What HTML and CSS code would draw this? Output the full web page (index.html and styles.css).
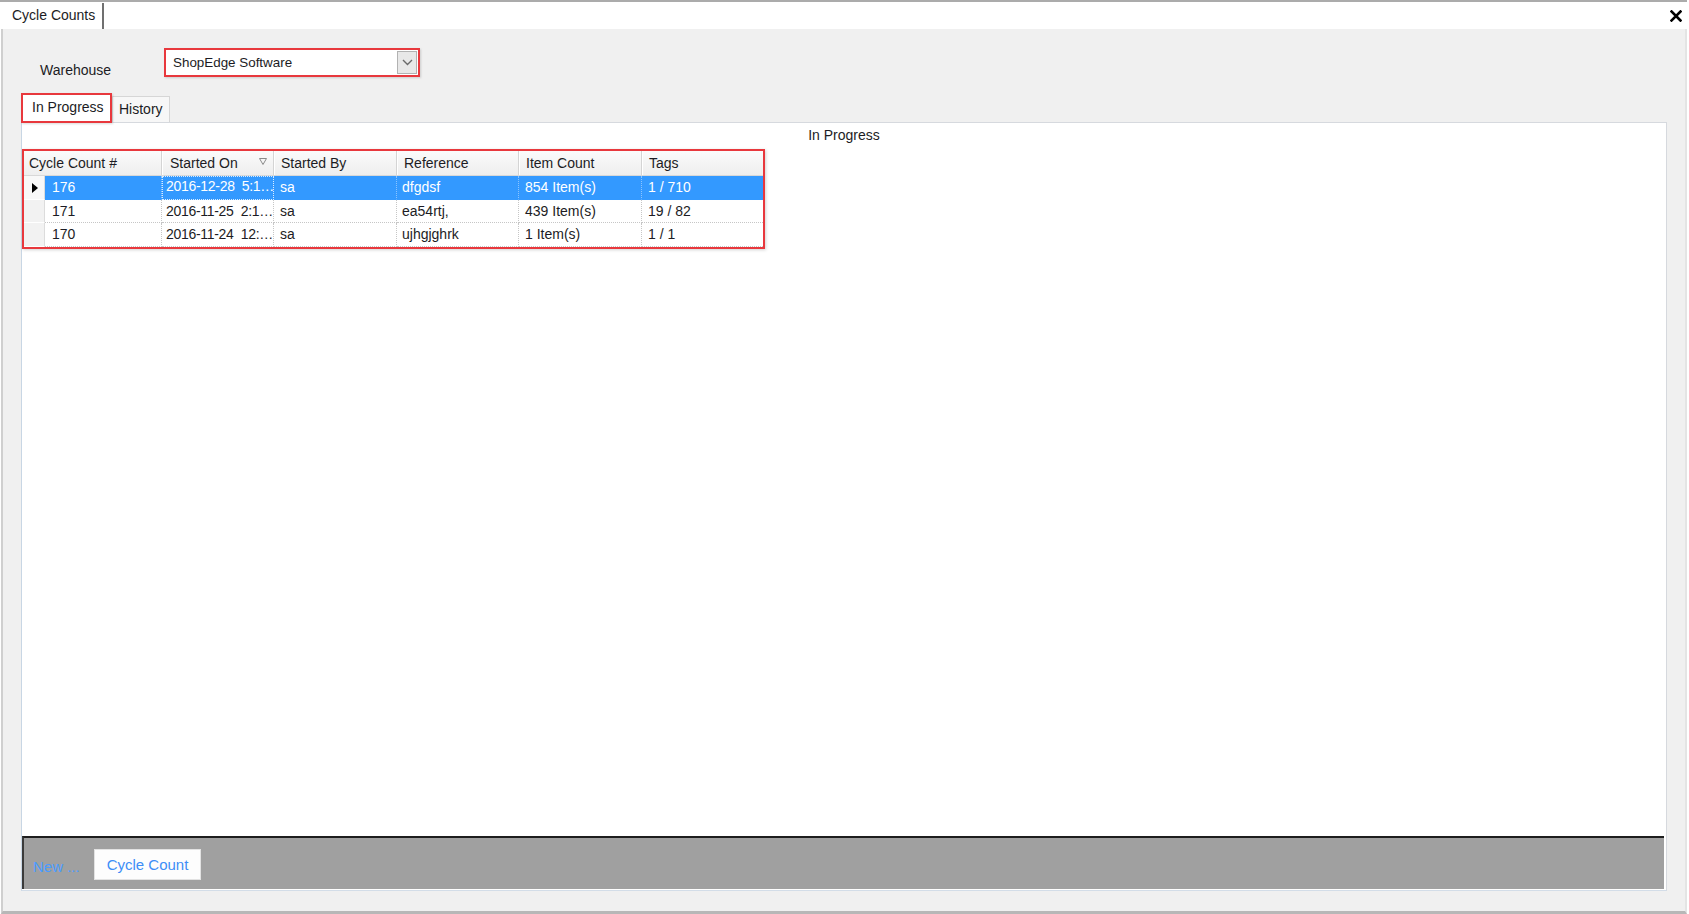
FILE: index.html
```html
<!DOCTYPE html>
<html>
<head>
<meta charset="utf-8">
<link rel="stylesheet" href="styles.css">
</head>
<body>
<div class="app">
  <div class="doc-strip">
    <div class="doc-tab">Cycle Counts</div>
    <div class="close-btn">
      <svg width="12" height="12" viewBox="0 0 12 12"><path d="M1.5 1.5 L10.5 10.5 M10.5 1.5 L1.5 10.5" stroke="#000" stroke-width="2.6" stroke-linecap="square"/></svg>
    </div>
  </div>
  <div class="main">
    <div class="wh-row">
      <div class="wh-label">Warehouse</div>
      <div class="combo">
        <span class="combo-text">ShopEdge Software</span>
        <span class="combo-btn">
          <svg width="11" height="7" viewBox="0 0 11 7"><path d="M1 1 L5.5 5.5 L10 1" fill="none" stroke="#6a6a6a" stroke-width="1.4"/></svg>
        </span>
      </div>
    </div>
    <div class="tabs">
      <div class="tab tab-active">In Progress</div>
      <div class="tab">History</div>
    </div>
    <div class="panel">
      <div class="caption">In Progress</div>
      <div class="grid">
        <div class="g-row g-head">
          <div class="h-cell h-first">Cycle Count #</div>
          <div class="h-cell c2">Started On
            <svg class="filter" width="8" height="7" viewBox="0 0 8 7"><path d="M0.5 0.5 L7.5 0.5 L4 6.5 Z" fill="none" stroke="#8a8a8a" stroke-width="1"/></svg>
          </div>
          <div class="h-cell c3">Started By</div>
          <div class="h-cell c4">Reference</div>
          <div class="h-cell c5">Item Count</div>
          <div class="h-cell c6">Tags</div>
        </div>
        <div class="g-row g-sel">
          <div class="r-head"><svg width="6" height="10" viewBox="0 0 6 10"><path d="M0 0 L6 5 L0 10 Z" fill="#000"/></svg></div>
          <div class="cell c1">176</div>
          <div class="cell c2 focus">2016-12-28&nbsp; 5:1…</div>
          <div class="cell c3">sa</div>
          <div class="cell c4">dfgdsf</div>
          <div class="cell c5">854 Item(s)</div>
          <div class="cell c6">1 / 710</div>
        </div>
        <div class="g-row">
          <div class="r-head"></div>
          <div class="cell c1">171</div>
          <div class="cell c2">2016-11-25&nbsp; 2:1…</div>
          <div class="cell c3">sa</div>
          <div class="cell c4">ea54rtj,</div>
          <div class="cell c5">439 Item(s)</div>
          <div class="cell c6">19 / 82</div>
        </div>
        <div class="g-row g-last">
          <div class="r-head"></div>
          <div class="cell c1">170</div>
          <div class="cell c2">2016-11-24&nbsp; 12:…</div>
          <div class="cell c3">sa</div>
          <div class="cell c4">ujhgjghrk</div>
          <div class="cell c5">1 Item(s)</div>
          <div class="cell c6">1 / 1</div>
        </div>
      </div>
      <div class="spacer"></div>
      <div class="toolbar">
        <span class="new-label">New ...</span>
        <span class="tb-btn">Cycle Count</span>
      </div>
    </div>
  </div>
</div>
</body>
</html>
```

FILE: styles.css
```css
* { box-sizing: border-box; }
html, body { margin: 0; padding: 0; }
body {
  width: 1689px;
  height: 914px;
  overflow: hidden;
  background: #ffffff;
  font-family: "Liberation Sans", Arial, sans-serif;
  font-size: 14px;
  color: #1c1c24;
}
.app {
  width: 1689px;
  height: 914px;
  display: flex;
  flex-direction: column;
}
.doc-strip {
  height: 29px;
  flex: none;
  border-top: 2px solid #ababab;
  margin-right: 2px;
  background: #ffffff;
  display: flex;
  align-items: flex-end;
}
.doc-tab {
  margin-left: 8px;
  height: 26px;
  padding: 0 7px 0 4px;
  line-height: 24px;
  border-right: 2px solid #707070;
  background: #ffffff;
}
.close-btn {
  margin-left: auto;
  margin-right: 5px;
  align-self: center;
  display: flex;
  padding-top: 1px;
}
.main {
  flex: 1;
  margin-left: 1px;
  margin-right: 2px;
  background: #f0f0f0;
  border-left: 2px solid #cfcfcf;
  border-right: 2px solid #e4e4e4;
  border-bottom: 3px solid #b7b7b7;
  padding-top: 19px;
  display: flex;
  flex-direction: column;
}
.wh-row {
  display: flex;
  height: 29px;
  padding-left: 37px;
}
.wh-label {
  width: 124px;
  margin-top: 14px;
  line-height: 16px;
}
.combo {
  width: 256px;
  height: 29px;
  border: 2px solid #e8383d;
  background: #ffffff;
  display: flex;
  align-items: center;
  padding-left: 7px;
  box-shadow: 1px 1px 2px rgba(0,0,0,0.15);
}
.combo-text {
  flex: 1;
  font-size: 13.4px;
  padding-bottom: 1px;
}
.combo-btn {
  width: 20px;
  height: 23px;
  margin-right: 1px;
  background: #e8e8e8;
  border: 1px solid #b2b2b2;
  display: flex;
  align-items: center;
  justify-content: center;
}
.tabs {
  display: flex;
  align-items: flex-start;
  height: 29px;
  margin-top: 16px;
  padding-left: 18px;
}
.tab {
  height: 26px;
  margin-top: 3px;
  padding: 0 6px;
  line-height: 24px;
  background: #f7f7f7;
  border: 1px solid #d6d6d6;
  border-bottom: none;
}
.tab-active {
  position: relative;
  z-index: 1;
  height: 30px;
  margin-top: 0;
  width: 91px;
  padding: 0 0 0 9px;
  line-height: 24px;
  background: #ffffff;
  border: 2px solid #e8383d;
  box-shadow: 1px 1px 2px rgba(0,0,0,0.15);
}
.panel {
  margin-left: 18px;
  width: 1646px;
  height: 769px;
  background: #ffffff;
  border: 1px solid #d6d9de;
  border-left-color: #c8d6e4;
  border-bottom-color: #d3dde8;
  display: flex;
  flex-direction: column;
}
.caption {
  height: 26px;
  line-height: 24px;
  text-align: center;
  flex: none;
}
.grid {
  width: 743px;
  height: 100px;
  border: 2px solid #e8383d;
  flex: none;
  box-shadow: 1px 1px 3px rgba(0,0,0,0.18);
}
.g-row {
  display: flex;
  height: 24px;
}
.g-row.g-last { height: 24px; }
.g-row:nth-child(3) { height: 23px; }
.g-head {
  height: 25px;
  background: linear-gradient(#fbfbfb, #eeeeee);
  border-bottom: 1px solid #d8d8d8;
}
.h-cell {
  line-height: 24px;
  padding-left: 7px;
  border-right: 1px solid #d4d4d4;
  box-shadow: inset 1px 0 0 #ffffff;
  position: relative;
  white-space: nowrap;
}
.h-first { width: 138px; padding-left: 5px; box-shadow: none; }
.c1 { width: 117px; }
.c2 { width: 112px; }
.c3 { width: 123px; }
.c4 { width: 122px; }
.c5 { width: 123px; }
.c6 { width: 121px; border-right: none !important; }
.h-cell.c2 { padding-left: 8px; }
.filter {
  position: absolute;
  right: 6px;
  top: 7px;
}
.r-head {
  width: 21px;
  background: #f2f2f2;
  border-right: 1px solid #dcdcdc;
  border-bottom: 1px solid #ffffff;
  display: flex;
  align-items: center;
  padding-left: 8px;
}
.cell {
  line-height: 23px;
  padding-left: 6px;
  border-right: 1px dotted #c6c6c6;
  border-bottom: 1px dotted #c6c6c6;
  white-space: nowrap;
  overflow: hidden;
}
.cell.c1 { padding-left: 7px; }
.cell.c2 { padding-left: 4px; letter-spacing: -0.3px; }
.cell.c3 { padding-left: 6px; }
.cell.c4 { padding-left: 5px; }
.g-sel .cell {
  background: #3399ff;
  color: #ffffff;
  border-right-color: #8cc4ff;
  border-bottom-color: #3399ff;
}
.g-sel .cell.focus {
  outline: 1px dotted #d8ecff;
  outline-offset: -1px;
  line-height: 20px;
}
.g-sel .r-head {
  background: #f8f8f8;
}
.spacer { flex: 1; }
.toolbar {
  height: 53px;
  margin-right: 2px;
  margin-bottom: 1px;
  background: #a0a0a0;
  border-top: 2px solid #1e1e1e;
  border-left: 2px solid #3a3a3a;
  display: flex;
  align-items: center;
  padding-left: 9px;
  flex: none;
}
.new-label {
  font-size: 15px;
  color: #4a9cff;
  margin-top: 6px;
  width: 61px;
}
.tb-btn {
  width: 107px;
  height: 31px;
  margin-top: 2px;
  background: #fdfdfd;
  border: 1px solid #e2e2e2;
  color: #3d8ef7;
  font-size: 15px;
  line-height: 29px;
  text-align: center;
}
```
